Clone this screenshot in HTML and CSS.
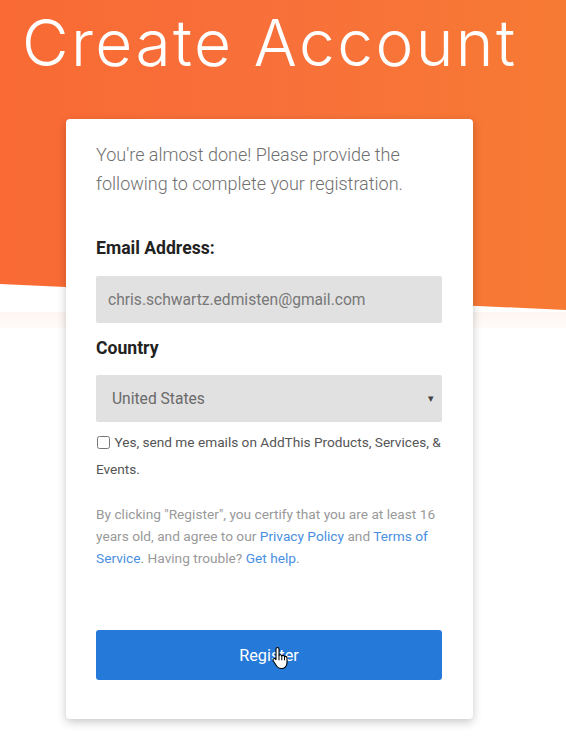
FILE: index.html
```html
<!DOCTYPE html>
<html lang="en">
<head>
<meta charset="utf-8">
<title>Create Account</title>
<link rel="stylesheet" href="styles.css">
</head>
<body>
<div class="page">
  <h1 class="title">Create Account</h1>
  <div class="card">
    <p class="intro">You're almost done! Please provide the following to complete your registration.</p>
    <label class="label label-email">Email Address:</label>
    <div class="field">chris.schwartz.edmisten@gmail.com</div>
    <label class="label label-country">Country</label>
    <div class="field select"><span>United States</span><span class="caret">▾</span></div>
    <label class="optin"><input type="checkbox" class="check"> Yes, send me emails on AddThis Products, Services, &amp; Events.</label>
    <p class="legal">By clicking "Register", you certify that you are at least 16 years old, and agree to our <a href="#">Privacy Policy</a> and <a href="#">Terms of Service</a>. Having trouble? <a href="#">Get help</a>.</p>
    <div class="button">Register
      <svg class="cursor" width="18" height="24" viewBox="0 0 18 24" aria-hidden="true">
        <path d="M5.5 1.5c.9 0 1.5.7 1.5 1.6v6.2c.3-.4.8-.6 1.3-.6.8 0 1.4.5 1.5 1.2.3-.3.7-.5 1.2-.5.8 0 1.4.6 1.5 1.3.3-.2.6-.3 1-.3.9 0 1.5.7 1.5 1.6v4.6c0 3.3-2.3 5.9-5.4 5.9H9c-1.8 0-3.2-.8-4.2-2.2L1.3 15c-.5-.7-.4-1.6.3-2.1.6-.5 1.5-.4 2 .2L4 13.6V3.1c0-.9.6-1.6 1.5-1.6z" fill="#fff" stroke="#000" stroke-width="1.1" stroke-linejoin="round"/>
        <path d="M7 9.3v5M9.8 9.9v4.4M12.5 10.9v3.4" stroke="#000" stroke-width="1" fill="none"/>
      </svg>
    </div>
  </div>
</div>
</body>
</html>
```
FILE: styles.css
```css
html, body {
  margin: 0;
  padding: 0;
  background: #ffffff;
}
.page {
  position: relative;
  min-height: 739px;
  padding-top: 1px;
  font-family: Roboto, "Liberation Sans", sans-serif;
}
.page::before {
  content: "";
  position: absolute;
  left: 0;
  top: 0;
  width: 100%;
  height: 312px;
  background: linear-gradient(90deg, #f96a34 0%, #f8703a 50%, #f77a33 100%);
  clip-path: polygon(0 0, 100% 0, 100% 310px, 0 284px);
  z-index: 0;
}
.page::after {
  content: "";
  position: absolute;
  left: 0;
  top: 312px;
  width: 100%;
  height: 16px;
  background: linear-gradient(180deg, #fdf6f2, #fffbf9);
  z-index: 0;
}
.title {
  position: relative;
  z-index: 1;
  margin: 0 0 0 22px;
  height: 118px;
  font-family: Inter, "Open Sans", sans-serif;
  font-weight: 300;
  font-size: 64px;
  line-height: 84px;
  color: #ffffff;
  letter-spacing: 2.4px;
}
.card {
  position: relative;
  z-index: 1;
  margin-left: 66px;
  width: 407px;
  box-sizing: border-box;
  padding: 21px 31px 39px 30px;
  background: #ffffff;
  border-radius: 4px;
  box-shadow: 0 3px 10px rgba(0, 0, 0, 0.22);
  display: flex;
  flex-direction: column;
}
.intro {
  margin: 0;
  font-size: 18px;
  font-weight: 300;
  line-height: 29px;
  color: #6f6f6f;
}
.label {
  display: block;
  font-size: 17.6px;
  font-weight: 700;
  line-height: 24px;
  color: #222222;
}
.label-email { margin-top: 38px; }
.label-country { margin-top: 13px; }
.field {
  margin-top: 16px;
  height: 47px;
  box-sizing: border-box;
  padding: 0 12px;
  display: flex;
  align-items: center;
  background: #e1e1e1;
  border-radius: 2px;
  font-size: 15.6px;
  color: #777777;
}
.select {
  margin-top: 15px;
  padding: 0 8px 0 16px;
  justify-content: space-between;
  color: #6a6a6a;
}
.caret {
  font-size: 11px;
  color: #444;
}
.optin {
  margin-top: 7px;
  font-size: 13.65px;
  line-height: 27px;
  color: #555555;
}
.check {
  margin: 0 1px 0 1px;
  width: 13px;
  height: 13px;
  vertical-align: -2px;
}
.legal {
  margin: 20px 0 0 0;
  font-size: 13.7px;
  line-height: 22px;
  color: #999999;
}
.legal a {
  color: #4a90e2;
  text-decoration: none;
}
.button {
  position: relative;
  margin-top: 61px;
  height: 50px;
  display: flex;
  align-items: center;
  justify-content: center;
  background: #2579d8;
  border-radius: 3px;
  color: #ffffff;
  font-size: 16.3px;
  font-weight: 400;
}
.cursor {
  position: absolute;
  left: 176px;
  top: 16px;
}
```
